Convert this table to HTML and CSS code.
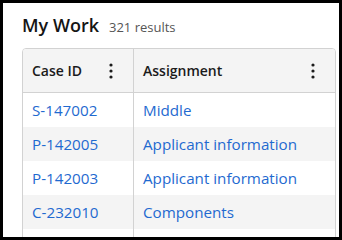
FILE: index.html
```html
<!DOCTYPE html>
<html>
<head>
<meta charset="utf-8">
<link rel="stylesheet" href="styles.css">
</head>
<body>
<div class="frame">
  <div class="title-row">
    <h1 class="title">My Work</h1>
    <span class="count">321 results</span>
  </div>
  <div class="table">
    <div class="row head">
      <div class="cell c1"><span>Case ID</span><svg class="kebab" width="4" height="16" viewBox="0 0 4 16"><circle cx="2" cy="2" r="1.6"/><circle cx="2" cy="8" r="1.6"/><circle cx="2" cy="14" r="1.6"/></svg></div>
      <div class="cell c2"><span>Assignment</span><svg class="kebab" width="4" height="16" viewBox="0 0 4 16"><circle cx="2" cy="2" r="1.6"/><circle cx="2" cy="8" r="1.6"/><circle cx="2" cy="14" r="1.6"/></svg></div>
    </div>
    <div class="row"><div class="cell c1"><a>S-147002</a></div><div class="cell c2"><a>Middle</a></div></div>
    <div class="row alt"><div class="cell c1"><a>P-142005</a></div><div class="cell c2"><a>Applicant information</a></div></div>
    <div class="row"><div class="cell c1"><a>P-142003</a></div><div class="cell c2"><a>Applicant information</a></div></div>
    <div class="row alt"><div class="cell c1"><a>C-232010</a></div><div class="cell c2"><a>Components</a></div></div>
    <div class="row"><div class="cell c1"></div><div class="cell c2"></div></div>
  </div>
</div>
</body>
</html>
```

FILE: styles.css
```css
html, body { margin: 0; padding: 0; background: #000; }
.frame {
  box-sizing: border-box;
  width: 342px;
  height: 240px;
  border: 3px solid #000;
  background: #fff;
  overflow: hidden;
  padding: 10px 3px 0 19px;
  font-family: "Open Sans", sans-serif;
  color: #1b1b1b;
}
.title-row {
  display: flex;
  align-items: baseline;
  gap: 10px;
  height: 24px;
  margin-bottom: 11px;
}
.title {
  margin: 0;
  font-size: 18px;
  line-height: 24px;
  font-weight: 600;
  color: #151515;
}
.count {
  font-size: 13px;
  color: #555;
}
.table {
  width: 314px;
  box-sizing: border-box;
  border: 1px solid #d2d2d2;
  border-radius: 4px 4px 0 0;
  overflow: hidden;
}
.row {
  display: grid;
  grid-template-columns: 111px 1fr;
  height: 34px;
}
.row.alt { background: #f4f4f4; }
.row.head {
  height: 44px;
  background: #f4f4f4;
  border-bottom: 1px solid #d2d2d2;
  box-sizing: border-box;
  font-size: 14px;
  font-weight: 600;
}
.cell {
  display: flex;
  align-items: center;
  justify-content: space-between;
  padding-left: 9px;
  padding-right: 20px;
}
.c1 { border-right: 1px solid #d2d2d2; }
.c2 { padding-right: 20px; }
.row a {
  font-size: 15.2px;
  color: #1f6ad0;
  text-decoration: none;
}
.kebab { fill: #1b1b1b; display: block; }
```
